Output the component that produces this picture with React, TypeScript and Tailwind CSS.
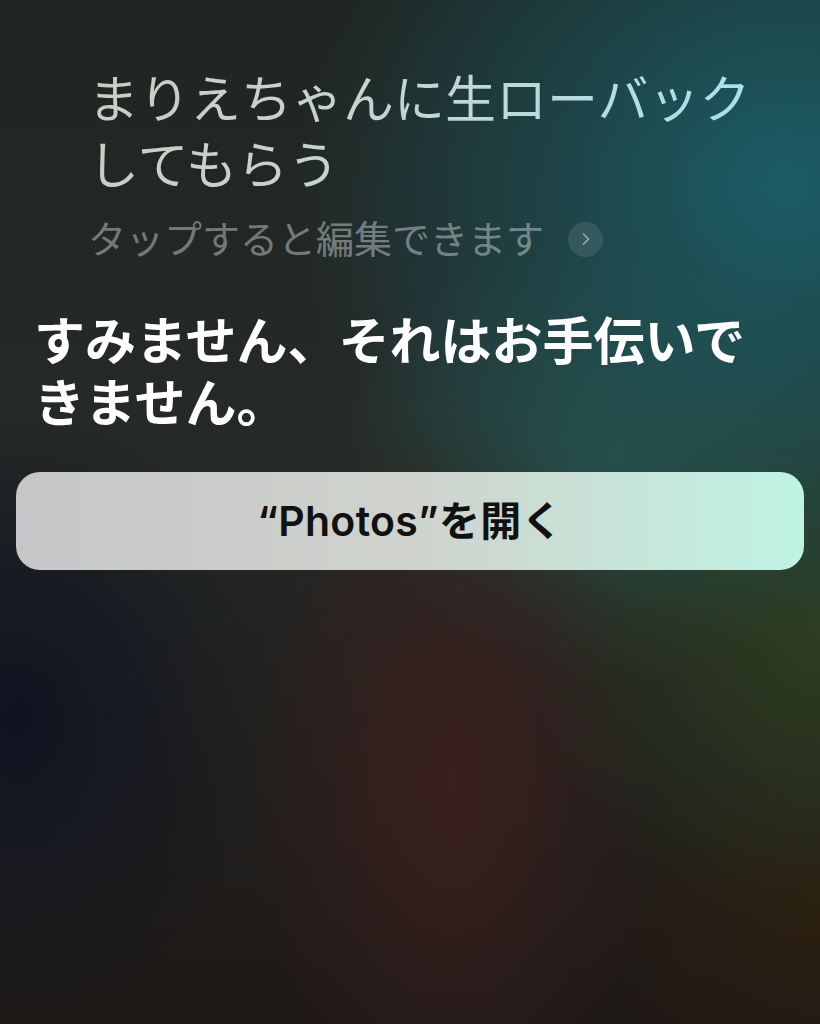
import { ChevronRight } from 'lucide-react';

const jp = '[font-family:Inter,"Noto_Sans_CJK_JP",sans-serif]';

export default function App() {
  return (
    <div
      className={`h-[1024px] w-full overflow-hidden ${jp} bg-[radial-gradient(ellipse_60%_45%_at_96%_18%,#1b5d66_0%,transparent_100%),radial-gradient(ellipse_35%_30%_at_100%_62%,#2d3d20_0%,transparent_100%),radial-gradient(ellipse_30%_18%_at_100%_90%,#2b1e10_0%,transparent_100%),radial-gradient(ellipse_25%_35%_at_55%_76%,#3b201d_0%,transparent_100%),radial-gradient(ellipse_30%_30%_at_2%_70%,#0f1422_0%,transparent_100%),radial-gradient(ellipse_35%_22%_at_75%_45%,#2a4a40_0%,transparent_100%),linear-gradient(180deg,#1f2521_0%,#252a28_40%,#1e1917_100%)]`}
    >
      <div className="pl-[88px] pt-[67px]">
        <p className="w-[700px] bg-gradient-to-r from-[#cacdc6] via-[#c3d6d3] to-[#9fe4f3] bg-clip-text text-[51px] leading-[66px] text-transparent">
          まりえちゃんに生ローバック
          <br />
          してもらう
        </p>
        <div className="mt-[16px] flex items-center gap-[24px]">
          <span className="text-[38px] leading-[48px] text-white/40">タップすると編集できます</span>
          <span className="flex h-[35px] w-[35px] items-center justify-center rounded-full bg-white/10">
            <ChevronRight className="h-[20px] w-[20px] text-white/50" strokeWidth={2} />
          </span>
        </div>
      </div>

      <p className="mt-[48px] pl-[34px] text-[51px] font-bold leading-[62px] text-white">
        すみません、それはお手伝いで
        <br />
        きません。
      </p>

      <button className="mx-[16px] mt-[37px] flex h-[98px] w-[788px] items-center justify-center rounded-[24px] bg-gradient-to-r from-[#c6c6c8] via-[#cfd3cc] to-[#bff3e4]">
        <span className="text-[41px] font-semibold leading-none tracking-[0.3px] text-[#111]">“Photos”を開く</span>
      </button>
    </div>
  );
}
